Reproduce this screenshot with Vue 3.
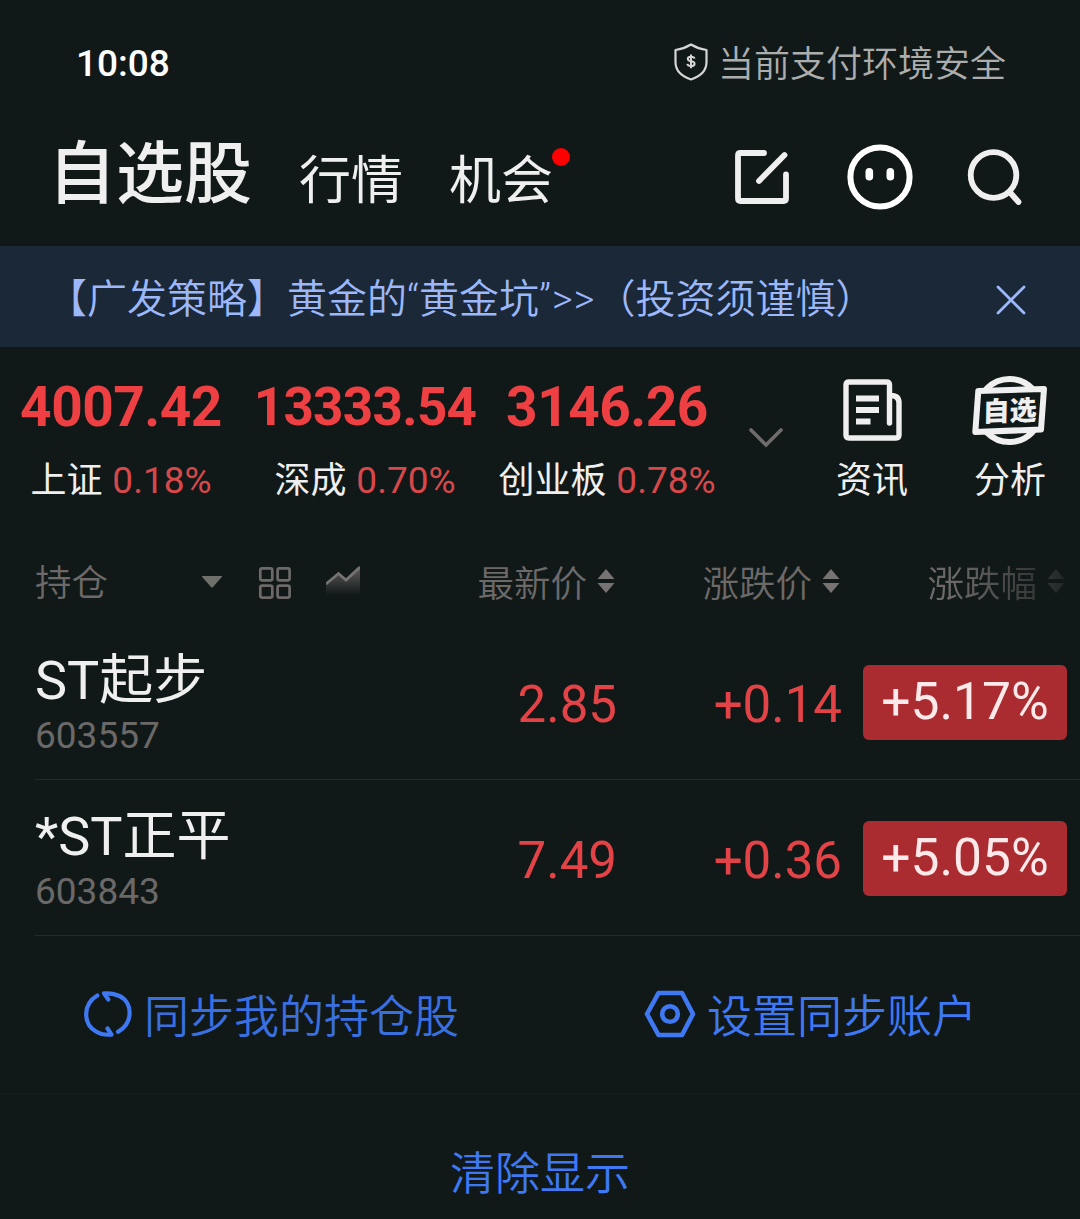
<script setup>
const tabs = [
  { label: '行情', dot: false },
  { label: '机会', dot: true },
]
const indices = [
  { value: '4007.42', name: '上证', change: '0.18%', cls: 'sh' },
  { value: '13333.54', name: '深成', change: '0.70%', cls: 'sz' },
  { value: '3146.26', name: '创业板', change: '0.78%', cls: 'cyb' },
]
const columns = [
  { label: '最新价', faded: false },
  { label: '涨跌价', faded: false },
  { label: '涨跌幅', faded: true },
]
const stocks = [
  { name: 'ST起步', code: '603557', price: '2.85', diff: '+0.14', pct: '+5.17%' },
  { name: '*ST正平', code: '603843', price: '7.49', diff: '+0.36', pct: '+5.05%' },
]
</script>

<template>
  <main class="screen">
    <div class="status">
      <span class="time">10:08</span>
      <span class="secure">
        <svg width="36" height="40" viewBox="0 0 36 40" fill="none">
          <path d="M18 2.5C13 5.5 7.5 7.3 2.5 8V20C2.5 28.5 9 34.5 18 37.5C27 34.5 33.5 28.5 33.5 20V8C28.500 7.3 23 5.500 18 2.500Z" stroke="#d6d6d6" stroke-width="2.2" stroke-linejoin="round" />
          <path d="M21.500 16.600C21.200 15.200 19.900 14.700 18 14.700C16 14.700 14.800 15.500 14.800 17C14.800 20.300 21.600 18.200 21.600 21.700C21.600 23.200 20.200 24.100 18 24.100C15.900 24.100 14.600 23.400 14.300 21.900M18 12.600V26.200" stroke="#d6d6d6" stroke-width="2" />
        </svg>
        <span class="secure-text">当前支付环境安全</span>
      </span>
    </div>

    <header class="head">
      <h1>自选股</h1>
      <a v-for="t in tabs" :key="t.label" class="tab">{{ t.label }}<i v-if="t.dot" class="dot"></i></a>
      <div class="tools">
        <svg width="56" height="56" viewBox="0 0 56 56" fill="none" stroke="#efefef" stroke-width="5.800" stroke-linecap="round" stroke-linejoin="round">
          <path d="M30 4H6.500Q4 4 4 6.500V49.500Q4 52 6.500 52H49.500Q52 52 52 49.500V25.500M50.500 6L25 32" />
        </svg>
        <svg class="face" width="66" height="66" viewBox="0 0 66 66" fill="none">
          <circle cx="33" cy="33" r="29.600" stroke="#fff" stroke-width="6" />
          <rect x="18.500" y="24" width="7.600" height="12.500" rx="3.800" fill="#fff" />
          <rect x="39.500" y="24" width="7.600" height="12.500" rx="3.800" fill="#fff" />
        </svg>
        <svg width="56" height="58" viewBox="0 0 56 58" fill="none" stroke="#efefef" stroke-width="5.800" stroke-linecap="round">
          <circle cx="26.500" cy="27" r="22.800" />
          <path d="M43.500 45L51.500 54" />
        </svg>
      </div>
    </header>

    <div class="banner">
      <span class="banner-text">【广发策略】黄金的“黄金坑”<span class="more">&gt;&gt;</span>（投资须谨慎）</span>
      <svg width="32" height="32" viewBox="0 0 32 32" stroke="#9cb8fb" stroke-width="2.800" stroke-linecap="round">
        <path d="M3 3L29 29M29 3L3 29" />
      </svg>
    </div>

    <section class="market">
      <div v-for="i in indices" :key="i.name" class="index" :class="i.cls">
        <strong>{{ i.value }}</strong>
        <p>{{ i.name }} <span>{{ i.change }}</span></p>
      </div>
      <svg class="expand" width="36" height="22" viewBox="0 0 36 22" fill="none" stroke="#706c6c" stroke-width="3.600" stroke-linecap="round">
        <path d="M3 3L18 18L33 3" />
      </svg>
      <div class="entry news">
        <svg width="72" height="72" viewBox="0 0 72 72" fill="none" stroke="#efefef" stroke-width="5.400" stroke-linecap="round" stroke-linejoin="round">
          <path d="M53.500 47V9Q53.500 6 50.500 6H13Q10 6 10 9V59Q10 62 13 62H60Q63 62 63 59V27Q63 19.500 55 19.500" />
          <path d="M20 22.500H43M20 34H43M20 45.500H34.500" stroke-linecap="butt" stroke-width="6" />
        </svg>
        <p>资讯</p>
      </div>
      <div class="entry">
        <svg width="76" height="72" viewBox="0 0 76 72" fill="none">
          <circle cx="37.500" cy="34.500" r="31.500" stroke="#efefef" stroke-width="6" />
          <path d="M6.300 15L72 13L69 53.500L3.300 56Z" fill="#111918" stroke="#efefef" stroke-width="6" stroke-linejoin="round" />
          <text class="badge-text" x="0" y="0" transform="translate(10.500 45.500) skewX(-3) rotate(-2)">自选</text>
        </svg>
        <p>分析</p>
      </div>
    </section>

    <section class="thead">
      <div class="group">
        <span>持仓</span>
        <svg class="caret" width="22" height="14" viewBox="0 0 22 14" fill="#6f706c"><path d="M1.500 1H20.500Q21.500 1 20.800 1.900L12 12Q11 13 10 12L1.200 1.900Q.500 1 1.500 1Z" /></svg>
        <svg class="grid" width="34" height="34" viewBox="0 0 34 34" fill="none" stroke="#6d6969" stroke-width="2.700">
          <rect x="2.300" y="2.300" width="12" height="12" rx="1.800" /><rect x="19.600" y="2.300" width="12" height="12" rx="1.800" />
          <rect x="2.300" y="19.600" width="12" height="12" rx="1.800" /><rect x="19.600" y="19.600" width="12" height="12" rx="1.800" />
        </svg>
        <svg class="trend" width="34" height="32" viewBox="0 0 34 32" fill="none">
          <defs><linearGradient id="area" x1="0" y1="0" x2="0" y2="1"><stop offset="0" stop-color="#6d6969" stop-opacity=".85" /><stop offset="1" stop-color="#6d6969" stop-opacity="0" /></linearGradient></defs>
          <path d="M0 19L12.500 8.500L20 15L34 2V30H0Z" fill="url(#area)" />
          <path d="M0 19L12.500 8.500L20 15L34 2" stroke="#777373" stroke-width="2.800" />
        </svg>
      </div>
      <div v-for="c in columns" :key="c.label" class="col" :class="{ faded: c.faded }">
        <span>{{ c.label }}</span>
        <svg width="18" height="26" viewBox="0 0 18 26" fill="#777373"><path d="M9 1L17.500 11H.500ZM9 25L17.500 15H.500Z" /></svg>
      </div>
    </section>

    <section v-for="s in stocks" :key="s.code" class="stock">
      <div class="ident">
        <b>{{ s.name }}</b>
        <small>{{ s.code }}</small>
      </div>
      <span class="num">{{ s.price }}</span>
      <span class="num">{{ s.diff }}</span>
      <span class="pct">{{ s.pct }}</span>
    </section>

    <section class="actions">
      <a class="sync">
        <svg width="48" height="48" viewBox="0 0 48 48" fill="none" stroke="#3f78f3" stroke-width="4.200" stroke-linecap="round" stroke-linejoin="round">
          <path d="M13.300 5.500C-1.300 14 -1.300 34 12 41.500Q18.500 45.500 27.500 44.600L23.500 38.500" />
          <path d="M34 41.800C49.500 33 49 12.500 35.500 6Q29 2.700 20 3.400L24.300 9.500" />
        </svg>
        <span>同步我的持仓股</span>
      </a>
      <a class="setup">
        <svg width="52" height="48" viewBox="0 0 52 48" fill="none" stroke="#3f78f3" stroke-width="4.600" stroke-linejoin="round">
          <path d="M14.500 3H38L49 24L38 45H14.500L3 24Z" />
          <circle cx="26" cy="24" r="7.800" />
        </svg>
        <span>设置同步账户</span>
      </a>
    </section>

    <footer class="clear">清除显示</footer>
  </main>
</template>

<style>
body { margin: 0; background: #111918; }
</style>

<style scoped>
.screen {
  width: 1080px;
  height: 1219px;
  overflow: hidden;
  display: flex;
  flex-direction: column;
  background: #111918;
  color: #efefef;
  font-family: Roboto, "Noto Sans CJK SC", sans-serif;
  white-space: nowrap;
}
.screen > * { flex: none; }
svg { display: block; flex: none; }
p, h1 { margin: 0; }

.status {
  height: 124px;
  box-sizing: border-box;
  padding: 2px 74px 0 76px;
  display: flex;
  justify-content: space-between;
  align-items: center;
}
.time { color: #fff; font-size: 37px; font-weight: 500; }
.secure { display: flex; align-items: center; gap: 9px; }
.secure svg { margin-top: -2px; }
.secure-text { font-size: 36px; line-height: 52px; color: #adadad; font-weight: 350; margin-top: 4px; }

.head {
  height: 122px;
  box-sizing: border-box;
  padding: 0 57px 0 48px;
  display: flex;
}
h1 { font-size: 68px; line-height: 102px; font-weight: 500; width: 251px; }
.tab { position: relative; font-size: 52px; line-height: 116px; width: 150px; }
.dot {
  position: absolute;
  left: 103px;
  top: 24px;
  width: 18px;
  height: 18px;
  border-radius: 50%;
  background: #fe0000;
}
.tools { flex: 1; height: 106px; display: flex; justify-content: flex-end; align-items: center; }
.face { margin: 0 54px 0 57px; }

.banner {
  height: 101px;
  box-sizing: border-box;
  padding: 6px 53px 0 47px;
  display: flex;
  align-items: center;
  justify-content: space-between;
  background: #1b2838;
  color: #9cb8fb;
}
.banner-text { font-size: 40px; font-weight: 350; line-height: 94px; }
.more { letter-spacing: 1px; margin-left: 1px; }

.market { height: 184px; display: flex; font-size: 36px; }
.index { display: flex; flex-direction: column; align-items: center; }
.index strong { color: #ee4043; font-size: 55px; line-height: 60px; font-weight: 700; margin-top: 30px; letter-spacing: -.5px; }
.index p { line-height: 52px; margin-top: 18px; }
.index span { color: #d8484a; font-size: 37px; margin-left: 1px; }
.sh { width: 242px; }
.sz { width: 246px; }
.sz strong { font-size: 53px; letter-spacing: -.7px; }
.cyb { width: 238px; }
.expand { margin: 80px 0 0 22px; }
.entry { display: flex; flex-direction: column; align-items: center; width: 138px; padding-top: 29px; }
.entry p { line-height: 52px; margin-top: 7px; }
.news { margin-left: 19px; }
.badge-text { font-size: 27px; font-weight: 900; fill: #efefef; }

.thead { height: 93px; display: flex; color: #6d6969; font-size: 36.5px; font-weight: 350; line-height: 52px; padding-top: 26px; box-sizing: border-box; }
.group { flex: none; width: 387px; height: 52px; padding-left: 35px; display: flex; align-items: center; }
.group span { margin-top: 2px; }
.caret { margin: -3px 35px 0 93px; }
.grid { margin: -1px 34px 0 0; }
.trend { margin-top: -4px; }
.col { flex: none; width: 193px; height: 54px; display: flex; align-items: center; justify-content: flex-end; gap: 10px; padding-left: 32px; }
.col:nth-child(2) { padding-left: 0; }
.col span { margin-top: 2px; }
.col svg { margin-top: -7px; }
.faded { mask-image: linear-gradient(to right, #000 115px, transparent 245px); }

.stock {
  height: 156px;
  box-sizing: border-box;
  margin-left: 35px;
  border-bottom: 1px solid #232929;
  display: flex;
}
.ident { width: 371px; display: flex; flex-direction: column; }
.ident b { font-size: 54px; font-weight: 400; line-height: 78px; margin-top: 18px; }
.ident small { font-size: 37px; line-height: 44px; margin-top: -6px; color: #6b6868; }
.num { width: 211px; text-align: right; font-size: 51px; line-height: 60px; margin-top: 51px; color: #e34346; }
.num + .num { width: 225px; }
.pct {
  margin: 41px 0 0 21px;
  width: 204px;
  height: 75px;
  line-height: 74px;
  border-radius: 6px;
  text-align: center;
  font-size: 51.5px;
  background: #ab2c30;
  color: #fde9ea;
}

.actions { height: 158px; box-sizing: border-box; padding-bottom: 2px; border-bottom: 1px solid #1a1a21; display: flex; align-items: center; font-size: 45px; color: #3f78f3; font-weight: 350; }
.actions a { display: flex; align-items: center; }
.sync { margin-left: 84px; gap: 12px; color: #3a6fe0; }
.setup { margin-left: 185px; gap: 11px; }
.clear { text-align: center; font-size: 45px; font-weight: 350; color: #3f78f3; line-height: 162px; height: 125px; }
</style>
